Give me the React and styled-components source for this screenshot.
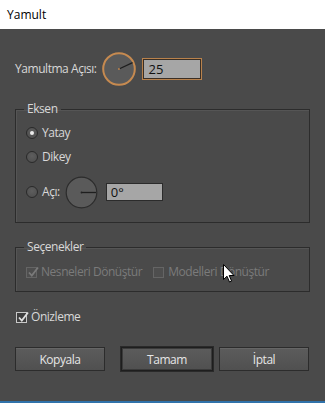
import React from "react";
import styled, { createGlobalStyle } from "styled-components";

const Global = createGlobalStyle`
  html, body { margin: 0; padding: 0; background: #4a4a4a; }
  body { font-family: "Open Sans", "Noto Sans", sans-serif; }
  * { box-sizing: border-box; }
`;

const Window = styled.div`
  width: 325px;
  height: 403px;
  display: flex;
  flex-direction: column;
  position: relative;
  overflow: hidden;
  background: #4a4a4a;
`;

const TitleBar = styled.div`
  height: 29px;
  flex: none;
  background: #ffffff;
  color: #000;
  font-size: 12px;
  display: flex;
  align-items: center;
  padding-left: 7px;
`;

const Body = styled.div`
  flex: 1;
  display: flex;
  flex-direction: column;
  padding: 23px 15px 0 15px;
  color: #d6d6d6;
  font-size: 12px;
  letter-spacing: -0.45px;
`;

const BottomLine = styled.div`
  height: 2px;
  flex: none;
  background: #3072aa;
`;

const AngleRow = styled.div`
  display: flex;
  align-items: center;
  height: 34px;
`;

const Label = styled.span`
  color: ${p => (p.$disabled ? "#7b7b7b" : "#d8d8d8")};
  font-size: 12px;
  line-height: 16px;
  white-space: nowrap;
`;

const NumInput = styled.div`
  width: ${p => p.$w}px;
  height: ${p => p.$h}px;
  background: #a6a6a6;
  color: #111;
  font-size: 13px;
  letter-spacing: 0;
  display: flex;
  align-items: center;
  padding-left: ${p => p.$pl}px;
  border: 1px solid ${p => (p.$focus ? "#b9824c" : "#2b2b2b")};
  box-shadow: ${p => (p.$focus ? "inset 0 0 0 1px #3a2f25" : "none")};
  margin-left: ${p => p.$ml}px;
`;

const Group = styled.fieldset`
  margin: ${p => p.$mt}px 0 0 0;
  padding: ${p => p.$pt}px 0 ${p => p.$pb}px 10px;
  border: 1px solid #2c2c2c;
  box-shadow: inset 1px 1px 0 #555;
  min-width: 0;
`;

const Legend = styled.legend`
  padding: 0 3px;
  margin-left: -2px;
  font-size: 12px;
  line-height: 16px;
  color: #d8d8d8;
`;

const OptionRow = styled.div`
  display: flex;
  align-items: center;
  height: ${p => p.$h || 18}px;
  margin-top: ${p => p.$mt || 0}px;
`;

const Radio = styled.span`
  width: 12px;
  height: 12px;
  border-radius: 50%;
  border: 1px solid #2a2a2a;
  background: radial-gradient(circle at 50% 40%, #5e5e5e, #4c4c4c);
  display: inline-flex;
  align-items: center;
  justify-content: center;
  margin-right: 4px;
  flex: none;
  &::after {
    content: "";
    width: 4px;
    height: 4px;
    border-radius: 50%;
    background: #ececec;
    display: ${p => (p.$checked ? "block" : "none")};
  }
`;

const Check = styled.span`
  width: 11px;
  height: 11px;
  border: 1px solid ${p => (p.$disabled ? "#656565" : "#c8c8c8")};
  background: ${p => (p.$disabled ? "#4e4e4e" : "#3e3e3e")};
  display: inline-flex;
  align-items: center;
  justify-content: center;
  margin-right: 4px;
  flex: none;
  position: relative;
  svg { position: absolute; left: 0px; top: -2px; }
`;

const CheckRow = styled.div`
  display: flex;
  align-items: center;
  height: 16px;
  margin-left: ${p => p.$ml || 0}px;
`;

const Checks = styled.div`
  display: flex;
  align-items: center;
`;

const Buttons = styled.div`
  display: flex;
  align-items: center;
  margin-top: 22px;
`;

const Button = styled.div`
  width: ${p => p.$w}px;
  height: 24px;
  margin-left: ${p => p.$ml || 0}px;
  display: flex;
  align-items: center;
  justify-content: center;
  font-size: 12px;
  color: #e6e6e6;
  background: linear-gradient(#5c5c5c, #505050);
  border: 1px solid ${p => (p.$default ? "#1e1e1e" : "#2c2c2c")};
  box-shadow: ${p => (p.$default ? "0 0 0 1px #2a2a2a, inset 0 0 0 1px #3a3a3a" : "inset 0 1px 0 #666")};
`;

const Spacer = styled.span`
  width: ${p => p.$w}px;
  flex: none;
`;

const Cursor = styled.svg`
  position: absolute;
  left: 223px;
  top: 264px;
`;

function Dial({ size, angle, accent }) {
  const r = size / 2;
  const rad = (angle * Math.PI) / 180;
  const x2 = r + (r - 2) * Math.cos(rad);
  const y2 = r - (r - 2) * Math.sin(rad);
  return (
    <svg width={size} height={size} style={{ flex: "none" }}>
      <circle cx={r} cy={r} r={r - 1.2} fill="#5a5a5a" stroke={accent ? "#c68a50" : "#2c2c2c"} strokeWidth={accent ? 2 : 1.2} />
      <line x1={r} y1={r} x2={x2} y2={y2} stroke="#1e1e1e" strokeWidth="1.3" />
      <circle cx={r} cy={r} r="0.9" fill={accent ? "#c68a50" : "#222"} />
    </svg>
  );
}

function Tick({ color }) {
  return (
    <svg width="13" height="13" viewBox="0 0 13 13">
      <path d="M2 6.5 L4.8 9.6 L11 1.5" fill="none" stroke={color} strokeWidth="1.8" />
    </svg>
  );
}

export default function App() {
  return (
    <>
      <Global />
      <Window>
        <TitleBar>Yamult</TitleBar>
        <Body>
          <AngleRow>
            <Label>Yamultma Açısı:</Label>
            <Spacer $w={5} />
            <Dial size={34} angle={25} accent />
            <NumInput $w={60} $h={22} $pl={6} $ml={6} $focus>25</NumInput>
          </AngleRow>

          <Group $mt={15} $pt={7} $pb={14}>
            <Legend>Eksen</Legend>
            <OptionRow>
              <Radio $checked />
              <Label>Yatay</Label>
            </OptionRow>
            <OptionRow $mt={6}>
              <Radio />
              <Label>Dikey</Label>
            </OptionRow>
            <OptionRow $mt={10} $h={32}>
              <Radio />
              <Label>Açı:</Label>
              <Spacer $w={5} />
              <Dial size={33} angle={0} />
              <NumInput $w={57} $h={18} $pl={4} $ml={8}>0°</NumInput>
            </OptionRow>
          </Group>

          <Group $mt={16} $pt={9} $pb={11}>
            <Legend>Seçenekler</Legend>
            <Checks>
              <CheckRow>
                <Check $disabled><Tick color="#7a7a7a" /></Check>
                <Label $disabled>Nesneleri Dönüştür</Label>
              </CheckRow>
              <CheckRow $ml={11}>
                <Check $disabled />
                <Label $disabled>Modelleri Dönüştür</Label>
              </CheckRow>
            </Checks>
          </Group>

          <CheckRow $ml={1} style={{ marginTop: 17 }}>
            <Check><Tick color="#e0e0e0" /></Check>
            <Label>Önizleme</Label>
          </CheckRow>

          <Buttons>
            <Button $w={90}>Kopyala</Button>
            <Button $w={92} $ml={16} $default>Tamam</Button>
            <Button $w={90} $ml={6}>İptal</Button>
          </Buttons>
        </Body>
        <BottomLine />
        <Cursor width="13" height="20" viewBox="0 0 13 20">
          <path d="M0.5 0.5 L0.5 15.5 L4 12.2 L6.5 18 L8.6 17.1 L6.2 11.5 L11 11.5 Z" fill="#fff" stroke="#000" strokeWidth="1" />
        </Cursor>
      </Window>
    </>
  );
}
